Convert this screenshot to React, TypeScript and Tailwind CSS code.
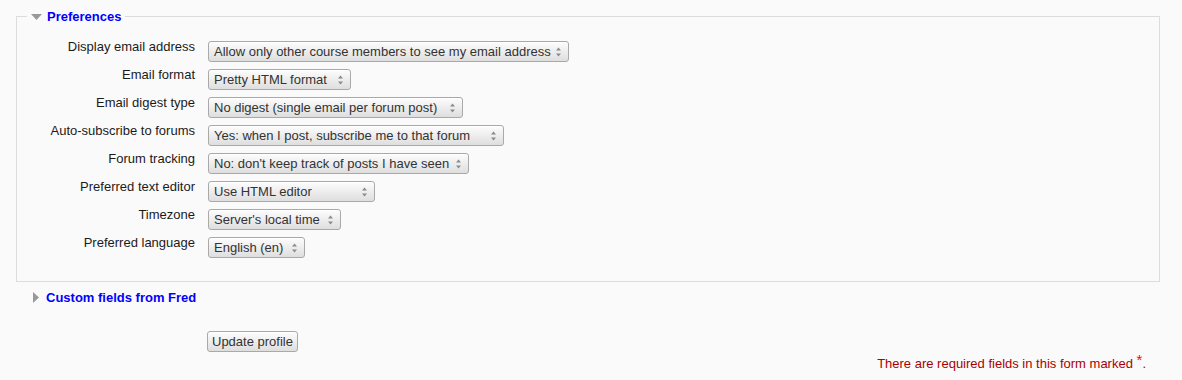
import React from "react";

type SelectProps = {
  value: string;
  widthClass: string;
};

type RowProps = {
  label: string;
  value: string;
  widthClass: string;
};

const fieldClass =
  "h-[21px] rounded-[3px] border border-[#a9a9a9] bg-gradient-to-b from-[#fdfdfd] to-[#dedede] text-[#333] shadow-[inset_0_1px_0_#fff]";

// little up/down arrows like the native chrome select
const Arrows = () => (
  <svg width="7" height="12" viewBox="0 0 7 12" className="shrink-0">
    <path d="M1 4.5 L3.5 1.5 L6 4.5 Z" fill="#8a8a8a" />
    <path d="M1 7.5 L3.5 10.5 L6 7.5 Z" fill="#8a8a8a" />
  </svg>
);

const Select = ({ value, widthClass }: SelectProps) => {
  return (
    <div className={`${fieldClass} ${widthClass} flex items-center justify-between pl-[5px] pr-[6px] mt-[2px]`}>
      <span className="whitespace-nowrap leading-[15px]">{value}</span>
      <Arrows />
    </div>
  );
};

const Row = ({ label, value, widthClass }: RowProps) => {
  return (
    <div className="flex h-[28px]">
      <div className="w-[178px] text-right leading-[15px] text-[#1a1a1a] whitespace-nowrap">{label}</div>
      <div className="ml-[13px]">
        <Select value={value} widthClass={widthClass} />
      </div>
    </div>
  );
};

const rows: RowProps[] = [
  { label: "Display email address", value: "Allow only other course members to see my email address", widthClass: "w-[361px]" },
  { label: "Email format", value: "Pretty HTML format", widthClass: "w-[143px]" },
  { label: "Email digest type", value: "No digest (single email per forum post)", widthClass: "w-[255px]" },
  { label: "Auto-subscribe to forums", value: "Yes: when I post, subscribe me to that forum", widthClass: "w-[296px]" },
  { label: "Forum tracking", value: "No: don't keep track of posts I have seen", widthClass: "w-[261px]" },
  { label: "Preferred text editor", value: "Use HTML editor", widthClass: "w-[167px]" },
  { label: "Timezone", value: "Server's local time", widthClass: "w-[133px]" },
  { label: "Preferred language", value: "English (en)", widthClass: "w-[97px]" },
];

export default function App() {
  return (
    <div className="min-h-[380px] w-[1182px] bg-[#fafafa] font-['Liberation_Sans',Arial,sans-serif] text-[13px] pt-[9px]">
      <fieldset className="mx-[16px] w-[1144px] border border-[#dcdcdc] pt-[15px] pb-[18px]">
        <legend className="ml-[10px] px-[4px] flex items-center leading-[15px]">
          <svg width="11" height="6" viewBox="0 0 11 6" className="mr-[5px]">
            <path d="M0 0 L11 0 L5.5 6 Z" fill="#999" />
          </svg>
          <span className="font-bold text-[#0000ff]">Preferences</span>
        </legend>
        {rows.map((row, index) => (
          <Row key={index} {...row} />
        ))}
      </fieldset>

      <div className="flex items-center ml-[33px] mt-[8px] leading-[15px]">
        <svg width="6" height="11" viewBox="0 0 6 11" className="mr-[7px]">
          <path d="M0 0 L6 5.5 L0 11 Z" fill="#999" />
        </svg>
        <span className="font-bold text-[#0000ff]">Custom fields from Fred</span>
      </div>

      <div className="ml-[207px] mt-[26px]">
        <button className={`${fieldClass} h-[20px] px-[4px] leading-[15px]`}>Update profile</button>
      </div>

      <div className="flex justify-end pr-[36px] mt-[3px] leading-[15px] text-[#aa0000]">
        <span>
          There are required fields in this form marked{" "}
          <span className="text-[#ff0000] text-[15px] relative top-[-3px]">*</span>.
        </span>
      </div>
    </div>
  );
}
